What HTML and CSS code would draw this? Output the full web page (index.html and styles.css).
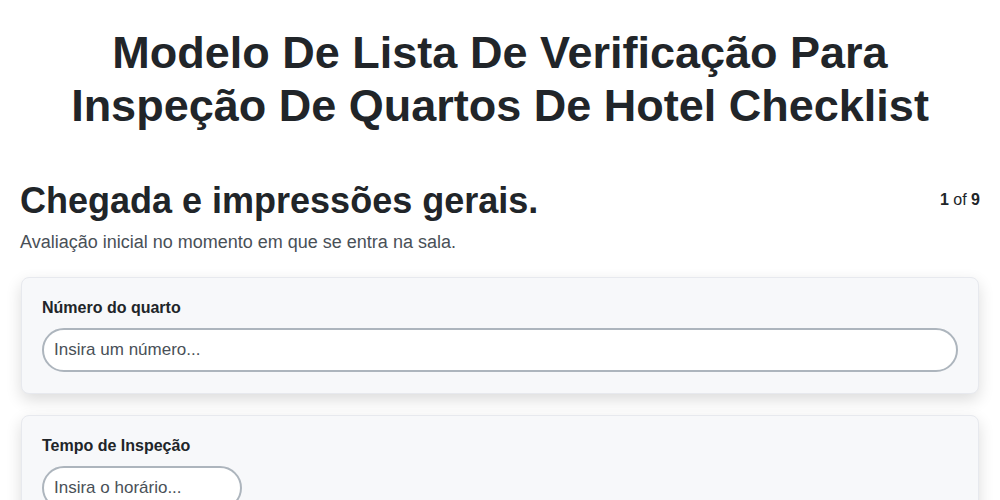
FILE: index.html
```html
<!DOCTYPE html>
<html lang="pt">
<head>
<meta charset="utf-8">
<link rel="stylesheet" href="styles.css">
</head>
<body>
<main class="page">
  <h1 class="title">Modelo De Lista De Verificação Para Inspeção De Quartos De Hotel Checklist</h1>
  <section class="section">
    <div class="section-head">
      <h2 class="section-title">Chegada e impressões gerais.</h2>
      <div class="pager"><b>1</b> of <b>9</b></div>
    </div>
    <p class="section-desc">Avaliação inicial no momento em que se entra na sala.</p>
    <div class="card">
      <label class="label">Número do quarto</label>
      <input class="input" type="text" placeholder="Insira um número...">
    </div>
    <div class="card">
      <label class="label">Tempo de Inspeção</label>
      <input class="input input-small" type="text" placeholder="Insira o horário...">
    </div>
  </section>
</main>
</body>
</html>
```
FILE: styles.css
```css
* { box-sizing: border-box; }
html, body { margin: 0; padding: 0; background: #ffffff; }
body {
  font-family: "Liberation Sans", Arial, sans-serif;
  color: #212529;
}
.page {
  padding: 26px 20px 20px 20px;
}
.title {
  margin: 0 0 47px 0;
  text-align: center;
  font-size: 45px;
  line-height: 53px;
  font-weight: 700;
  color: #212529;
  padding: 0 30px;
}
.section-head {
  display: flex;
  justify-content: space-between;
  align-items: flex-start;
}
.section-title {
  margin: 0;
  font-size: 36px;
  line-height: 1.2;
  font-weight: 700;
}
.pager {
  font-size: 16px;
  padding-top: 12px;
}
.pager b { font-weight: 700; }
.section-desc {
  margin: 10px 0 24px 0;
  font-size: 18px;
  color: #495057;
}
.card {
  background: #f7f8fa;
  border: 1px solid #e7e9ee;
  border-radius: 8px;
  box-shadow: 0 6px 16px rgba(0, 0, 0, 0.14);
  padding: 21px 20px 21px 20px;
  margin: 0 1px 21px 1px;
  display: flex;
  flex-direction: column;
  align-items: flex-start;
}
.label {
  font-size: 16px;
  font-weight: 700;
  margin-bottom: 11px;
  color: #212529;
}
.input {
  width: 100%;
  height: 44px;
  border: 2px solid #adb5bd;
  border-radius: 22px;
  background: #ffffff;
  padding: 0 10px;
  font-family: "Liberation Sans", Arial, sans-serif;
  font-size: 17px;
  color: #212529;
  outline: none;
}
.input::placeholder { color: #495057; opacity: 1; }
.input-small { width: 200px; }
```
